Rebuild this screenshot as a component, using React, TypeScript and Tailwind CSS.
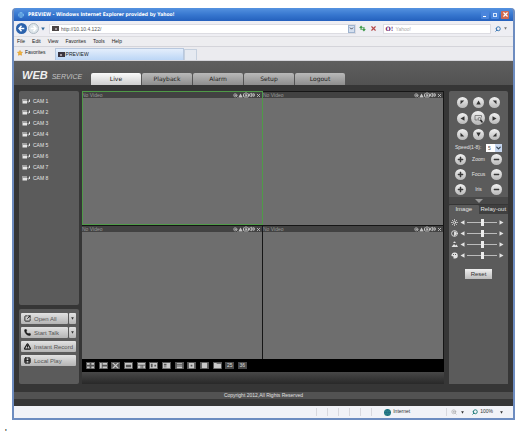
import type { ReactNode } from "react";
import {
  Camera,
  ChevronDown,
  Contrast,
  Film,
  Globe,
  Phone,
  Search,
  SquareArrowOutUpRight,
  Star,
  Sun,
  TriangleAlert,
  Volume2,
  X,
  ZoomIn,
} from "lucide-react";

const cameras = [1, 2, 3, 4, 5, 6, 7, 8];
const menus = ["File", "Edit", "View", "Favorites", "Tools", "Help"];
const tabs = ["Live", "Playback", "Alarm", "Setup", "Logout"];

const ptzKeys = [
  { name: "Up left", d: "M1 1h7.500L1 8.500z" },
  { name: "Up", d: "M5 1 9.500 9h-9z" },
  { name: "Up right", d: "M9 1v7.500L1.500 1z" },
  { name: "Left", d: "M1 5 9 .5v9z" },
  { name: "Position", d: "" },
  { name: "Right", d: "M9 5 1 .5v9z" },
  { name: "Down left", d: "M1 9V1.500L8.500 9z" },
  { name: "Down", d: "M5 9 .5 1h9z" },
  { name: "Down right", d: "M9 9H1.500L9 1.500z" },
];

const layouts = [
  { name: "High quality", d: "M1 1h3v2H1zM6 1h3v2H6zM1 5h3v2H1zM6 5h3v2H6z" },
  { name: "Fluency", d: "M1 1h2v6H1zM4 1h5v2H4zM4 5h5v2H4z" },
  { name: "Full screen", d: "M1 1h2l2 2 2-2h2L6 4l3 3H7L5 5 3 7H1l3-3z" },
  { name: "1 window", d: "M1 1h8v6H1zM2 3v3h6V3z" },
  { name: "4 windows", d: "M1 1h8v2H1zM1 4h3v3H1zM5 4h1v3H5zM7 4h2v3H7z" },
  { name: "6 windows", d: "M1 1h8v6H1zM2 2v4h2V2zM6 3v2h2V3z" },
  { name: "8 windows", d: "M1 1h8v6H1zM2 2v2h3V2zM2 5v1h3V5z" },
  { name: "9 windows", d: "M2 1h6v1H2zM2 3h6v1H2zM2 5h6v2H2z" },
  { name: "13 windows", d: "M2 1h6v6H2zM4 3v2h2V3z" },
  { name: "16 windows", d: "M2 1h6v6H2z" },
  { name: "20 windows", d: "M1 1h3v1h5v5H1z" },
];

const adjustments = [
  { name: "Brightness", icon: <Sun className="size-[7px]" strokeWidth={3} /> },
  { name: "Contrast", icon: <Contrast className="size-[7px] [&_path]:fill-current" strokeWidth={3} /> },
  {
    name: "Saturation",
    icon: (
      <svg viewBox="0 0 14 14" className="size-[7px]" fill="currentColor">
        <path d="M1 12 6 6l3 3 2-2 3 5zM7 1a2 2 0 0 1 2 3H5a2 2 0 0 1 2-3z" />
      </svg>
    ),
  },
  {
    name: "Hue",
    icon: (
      <svg viewBox="0 0 14 14" className="size-[7px]" fill="currentColor" fillRule="evenodd">
        <path d="M7 1a6 6 0 0 1 1 12H5V9L1 8a6 6 0 0 1 6-7zM4 4v2h2V4zM8 4v2h2V4z" />
      </svg>
    ),
  },
];

function Triangle({ angle, className }: { angle: number; className: string }) {
  return (
    <svg viewBox="0 0 10 10" className={className} fill="currentColor">
      <path d="M5 1 9.500 9h-9z" transform={`rotate(${angle} 5 5)`} />
    </svg>
  );
}

function TitleBar() {
  return (
    <div className="flex h-[13px] items-center gap-1 rounded-t-sm bg-linear-to-b from-[#5592e0] via-[#3878d0] to-[#2460bd] px-1 text-white">
      <Globe className="size-[6px] text-[#8fd0f5]" />
      <h1 className="font-['DejaVu_Sans_Condensed','DejaVu_Sans',sans-serif] text-[5px] font-bold whitespace-nowrap">
        PREVIEW - Windows Internet Explorer provided by Yahoo!
      </h1>
      <div className="ml-auto flex gap-[2px]">
        <button aria-label="Minimize" className="flex size-2 items-end rounded-[1px] bg-[#4a85dc] p-[2px]">
          <span className="h-px w-[3px] bg-white" />
        </button>
        <button aria-label="Maximize" className="flex size-2 items-center justify-center rounded-[1px] bg-[#4a85dc]">
          <span className="size-1 border border-[#d5e6fb]" />
        </button>
        <button aria-label="Close" className="flex size-2 items-center justify-center rounded-[1px] bg-[#d0694e]">
          <X className="size-[7px]" strokeWidth={4} />
        </button>
      </div>
    </div>
  );
}

function AddressBar() {
  return (
    <div className="flex h-[15px] items-center bg-[#eeeef3] pr-1 pl-[2px]">
      <button aria-label="Back" className="flex size-[11px] items-center justify-center rounded-full bg-[#2b62ac] text-white">
        <svg viewBox="0 0 10 10" className="size-[7px]" fill="none" stroke="currentColor" strokeWidth="2">
          <path d="M9 5H2M5 1 1.500 5 5 9" />
        </svg>
      </button>
      <button aria-label="Forward" className="ml-px flex size-[11px] items-center justify-center rounded-full border border-[#aebac4] bg-[#dde5ea] text-white">
        <svg viewBox="0 0 10 10" className="size-[7px]" fill="none" stroke="currentColor" strokeWidth="2">
          <path d="M1 5h7M5 1l3.500 4L5 9" />
        </svg>
      </button>
      <button aria-label="Recent pages" className="ml-[2px] text-[#31699c]">
        <Triangle angle={180} className="size-1" />
      </button>
      <div className="ml-1 flex h-[10px] flex-1 items-center border border-[#dcdce2] bg-white pl-[2px]">
        <span className="flex h-[5px] w-[7px] items-center justify-center bg-[#4b4444]">
          <span className="size-[2px] bg-[#a39aa0]" />
        </span>
        <input
          aria-label="Address"
          defaultValue="http://10.10.4.122/"
          className="ml-[2px] min-w-0 flex-1 bg-transparent text-[5px] leading-[8px] text-[#555]"
        />
        <button aria-label="Show addresses" className="flex h-2 w-[7px] items-center justify-center border border-[#9fb4d0] bg-[#d4dfef] text-[#334]">
          <ChevronDown className="size-[5px]" strokeWidth={4} />
        </button>
      </div>
      <button aria-label="Refresh" className="ml-[3px] flex size-2 items-center justify-center text-[#3f9a49]">
        <svg viewBox="0 0 10 10" className="size-[7px]" fill="none" stroke="currentColor" strokeWidth="1.600">
          <path d="M3 7V2M1 4l2-2 2 2M7 3v5M5 6l2 2 2-2" />
        </svg>
      </button>
      <button aria-label="Stop" className="ml-[3px] flex size-2 items-center justify-center text-[#b54a4a]">
        <X className="size-[7px]" strokeWidth={4} />
      </button>
      <div className="ml-[5px] flex h-[10px] w-[22%] items-center border border-[#dcdce2] bg-white pl-[2px]">
        <b className="font-['DejaVu_Serif',serif] text-[6px] leading-none text-[#68226e]">O!</b>
        <input
          aria-label="Search"
          placeholder="Yahoo!"
          className="ml-[2px] min-w-0 flex-1 bg-transparent text-[5px] leading-[8px] placeholder:text-[#aaa]"
        />
      </div>
      <button aria-label="Run search" className="ml-[3px] flex size-2 items-center justify-center text-[#3c78b4]">
        <Search className="size-[6px] -scale-x-100" strokeWidth={4} />
      </button>
      <button aria-label="Search options" className="text-[#777]">
        <Triangle angle={180} className="mx-[2px] size-[3px]" />
      </button>
    </div>
  );
}

function BrowserTop() {
  return (
    <>
      <TitleBar />
      <AddressBar />
      <nav className="flex h-[10px] items-center gap-[7px] border-t border-[#dcdce0] bg-[#ededf0] px-[3px] text-[5px] text-[#222]">
        {menus.map((menu) => (
          <button key={menu}>{menu}</button>
        ))}
      </nav>
      <div className="flex h-[15px] items-end border-t border-b border-[#d4d4da] bg-[#ebebef] pl-[3px] text-[5px] text-[#222]">
        <button className="flex h-[12px] items-center gap-[2px] pb-[2px]">
          <Star className="size-[6px] fill-[#f0b23c] text-[#d99323]" />
          Favorites
        </button>
        <button className="ml-[9px] flex h-[12px] w-[26%] items-center gap-px border border-b-0 border-[#b8c8de] bg-linear-to-b from-[#e4eefb] to-[#bcd6f6] pl-[2px]">
          <span className="flex h-[5px] w-[7px] items-center justify-center bg-[#3b3540]">
            <span className="size-[2px] bg-[#a39aa0]" />
          </span>
          PREVIEW
        </button>
        <button aria-label="New tab" className="h-[11px] w-[13px] border border-b-0 border-[#c5d0de] bg-[#e6eaf1]" />
      </div>
    </>
  );
}

function CameraIcon() {
  return (
    <svg viewBox="0 0 16 10" className="h-[5px] w-2" fill="currentColor">
      <path d="M0 1h10v2H0zM1 4h9v5H1zM11 5l2-2v5l-2-2zM14 1h2v5h-2z" />
    </svg>
  );
}

function SideButton({ icon, label, menu }: { icon: ReactNode; label: string; menu?: boolean }) {
  return (
    <div className="flex h-[11px] gap-px">
      <button className="flex flex-1 items-center gap-[3px] rounded-[1px] bg-linear-to-b from-[#e2e2e2] to-[#b5b5b5] pl-[3px] text-[6px] leading-none whitespace-nowrap text-[#555]">
        <span className="text-[#1b1b1b]">{icon}</span>
        {label}
      </button>
      {menu && (
        <button aria-label={`${label} options`} className="flex w-[7px] items-center justify-center rounded-[1px] bg-linear-to-b from-[#e2e2e2] to-[#b5b5b5] text-[#333]">
          <Triangle angle={180} className="size-[3px]" />
        </button>
      )}
    </div>
  );
}

function Sidebar() {
  return (
    <aside className="flex flex-col gap-1">
      <ul className="flex-1 rounded-xs bg-[#5b5b5b] pt-[5px] pl-[3px] text-[5px] text-[#e6e6e6]">
        {cameras.map((n) => (
          <li key={n} className="flex h-[11px] items-center gap-[3px]">
            <CameraIcon />
            CAM {n}
          </li>
        ))}
      </ul>
      <div className="flex h-[75px] flex-col gap-[3px] rounded-xs bg-[#5b5b5b] pt-1 pr-[3px] pl-[2px]">
        <SideButton icon={<SquareArrowOutUpRight className="size-[7px]" strokeWidth={3} />} label="Open All" menu />
        <SideButton icon={<Phone className="size-[7px] fill-current" />} label="Start Talk" menu />
        <SideButton icon={<TriangleAlert className="size-[7px]" strokeWidth={4} />} label="Instant Record" />
        <SideButton icon={<Film className="size-[7px]" strokeWidth={3} />} label="Local Play" />
      </div>
    </aside>
  );
}

function VideoCell({ active }: { active?: boolean }) {
  return (
    <section
      className={`flex flex-col border-t border-r border-[#161616] ${
        active ? "outline -outline-offset-1 outline-[#4f9a48]" : ""
      }`}
    >
      <header className="flex h-[6px] items-center justify-between bg-[#424242] text-[5px] leading-none text-[#999]">
        <span>No Video</span>
        <span className="flex items-center pr-px text-[#c4c4c4]">
          <ZoomIn className="size-[5px]" strokeWidth={3} />
          <Triangle angle={0} className="size-[5px]" />
          <Camera className="size-[6px]" strokeWidth={4} />
          <Volume2 className="size-[6px]" strokeWidth={4} />
          <X className="ml-px size-[5px]" strokeWidth={4} />
        </span>
      </header>
      <div className="aspect-[180/127] bg-[#6e6e6e]" />
    </section>
  );
}

function Viewer() {
  return (
    <main className="mr-[2px] bg-linear-to-b from-[#444] to-[#2b2b2b]">
      <div className="grid grid-cols-2">
        <VideoCell active />
        <VideoCell />
        <VideoCell />
        <VideoCell />
      </div>
      <div className="bg-black py-[3px] pl-1">
        <div className="flex w-[161px] justify-between">
          {layouts.map((item) => (
            <button key={item.name} aria-label={item.name} className="h-[7px] w-[9px] bg-[#565656] text-[#c9c9c9]">
              <svg viewBox="0 0 10 8" className="size-full" fill="currentColor" fillRule="evenodd">
                <path d={item.d} />
              </svg>
            </button>
          ))}
          <button className="h-[7px] w-[9px] bg-[#484848] text-[5px] leading-[7px] text-[#ddd]">25</button>
          <button className="h-[7px] w-[9px] bg-[#484848] text-[5px] leading-[7px] text-[#ddd]">36</button>
        </div>
      </div>
      <div className="h-3 bg-linear-to-b from-[#484848] to-[#292929]" />
    </main>
  );
}

function LensRow({ label }: { label: string }) {
  const round =
    "flex size-[11px] items-center justify-center rounded-full bg-linear-to-b from-[#f2f2f2] to-[#b9b9b9] text-[#3a3a3a]";
  return (
    <div className="flex h-[15px] items-center justify-between">
      <button aria-label={`${label} in`} className={round}>
        <svg viewBox="0 0 7 7" className="size-[7px]" fill="currentColor">
          <path d="M3 1h1v2h2v1H4v2H3V4H1V3h2z" stroke="currentColor" strokeWidth=".5" />
        </svg>
      </button>
      <span>{label}</span>
      <button aria-label={`${label} out`} className={round}>
        <svg viewBox="0 0 7 7" className="size-[7px]" fill="currentColor">
          <path d="M1 3h5v1H1z" stroke="currentColor" strokeWidth=".5" />
        </svg>
      </button>
    </div>
  );
}

function ControlPanel() {
  return (
    <aside className="flex flex-col text-[5px] text-[#e3e3e3]">
      <div className="rounded-t-xs bg-[#5b5b5b] px-[6px] pt-[3px]">
        <div className="grid grid-cols-3 place-items-center">
          {ptzKeys.map((key) => (
            <div key={key.name} className="flex h-4 items-center">
              {key.d ? (
                <button aria-label={key.name} className="flex size-[11px] items-center justify-center rounded-full bg-linear-to-b from-[#f2f2f2] to-[#b9b9b9] text-[#333]">
                  <svg viewBox="0 0 10 10" className="size-[5px]" fill="currentColor">
                    <path d={key.d} />
                  </svg>
                </button>
              ) : (
                <button aria-label={key.name} className="flex size-[14px] items-center justify-center rounded-full bg-linear-to-b from-[#f2f2f2] to-[#b4b4b4] text-[#666]">
                  <svg viewBox="0 0 18 18" className="size-[9px]" fill="none" stroke="currentColor" strokeWidth="1.500">
                    <path d="M7 12H2V3h13v4" />
                    <circle cx="11" cy="10" r="3" />
                    <path d="m13 12 4 5" stroke="#222" strokeWidth="3" />
                  </svg>
                </button>
              )}
            </div>
          ))}
        </div>
        <div className="mt-px flex h-[9px] items-center justify-between">
          <label htmlFor="speed">Speed(1-8):</label>
          <div className="relative">
            <select id="speed" defaultValue="5" className="block h-2 w-4 appearance-none bg-white pl-[2px] text-[5px] leading-[8px] text-[#444]">
              {cameras.map((n) => (
                <option key={n}>{n}</option>
              ))}
            </select>
            <ChevronDown className="pointer-events-none absolute top-0 right-0 h-2 w-[7px] bg-[#c5d5ee] text-[#345]" strokeWidth={4} />
          </div>
        </div>
        <LensRow label="Zoom" />
        <LensRow label="Focus" />
        <LensRow label="Iris" />
      </div>
      <button aria-label="Collapse" className="flex h-[7px] items-center justify-center bg-[#484848] text-[#999]">
        <svg viewBox="0 0 8 4" className="h-1 w-2" fill="currentColor">
          <path d="M0 0h8L4 4z" />
        </svg>
      </button>
      <div className="flex h-[10px] bg-[#363636] pt-px text-[6px] leading-[9px] whitespace-nowrap">
        <button className="w-1/2 rounded-t-[1px] bg-[#5b5b5b]">Image</button>
        <button className="w-1/2 bg-[#404040]">Relay-out</button>
      </div>
      <div className="flex-1 bg-[#5b5b5b] px-[2px] pt-[3px]">
        {adjustments.map((item) => (
          <div key={item.name} className="flex h-[11px] items-center gap-[2px]">
            {item.icon}
            <button aria-label={`Less ${item.name}`}>
              <Triangle angle={-90} className="size-[5px]" />
            </button>
            <input
              type="range"
              aria-label={item.name}
              defaultValue={50}
              className="h-2 min-w-0 flex-1 appearance-none bg-transparent [&::-webkit-slider-runnable-track]:h-px [&::-webkit-slider-runnable-track]:bg-[#bbb] [&::-webkit-slider-thumb]:-mt-[3px] [&::-webkit-slider-thumb]:h-[7px] [&::-webkit-slider-thumb]:w-[3px] [&::-webkit-slider-thumb]:appearance-none [&::-webkit-slider-thumb]:bg-[#ededed]"
            />
            <button aria-label={`More ${item.name}`} className="pr-[2px]">
              <Triangle angle={90} className="size-[5px]" />
            </button>
          </div>
        ))}
        <button className="mx-auto mt-[8px] block h-[10px] w-[27px] bg-linear-to-b from-[#f0f0f0] to-[#bdbdbd] text-[6px] leading-[10px] text-[#333]">
          Reset
        </button>
      </div>
    </aside>
  );
}

function WebService() {
  return (
    <div className="bg-[#363636]">
      <header className="flex h-[24px] items-end bg-linear-to-b from-[#5e5e5e] to-[#525252] text-[#eee]">
        <div className="flex w-[77px] items-baseline gap-1 pb-[2px] pl-2 italic">
          <span className="text-[11px] leading-[12px] font-bold">WEB</span>
          <span className="text-[7px] leading-[12px] text-[#c4c4c4]">SERVICE</span>
        </div>
        <nav className="flex gap-px">
          {tabs.map((tab, i) => (
            <a
              key={tab}
              href={`#${tab.toLowerCase()}`}
              className={`block h-3 w-[50px] rounded-t-xs text-center font-['DejaVu_Sans',sans-serif] text-[6px] leading-[12px] text-[#222] ${
                i === 0 ? "bg-linear-to-b from-[#fafafa] to-[#cfcfcf]" : "bg-linear-to-b from-[#b9b9b9] to-[#8e8e8e]"
              }`}
            >
              {tab}
            </a>
          ))}
        </nav>
      </header>
      <div className="grid grid-cols-[60px_1fr_59px] gap-x-[3px] px-[5px] pt-[6px] pb-2">
        <Sidebar />
        <Viewer />
        <ControlPanel />
      </div>
      <footer className="pb-[7px]">
        <p className="h-[7px] bg-[#525252] text-center text-[5px] leading-[7px] text-[#e0e0e0]">
          Copyright 2012,All Rights Reserved
        </p>
      </footer>
    </div>
  );
}

function StatusBar() {
  return (
    <div className="flex h-[12px] items-center bg-[#f1f2f7] text-[5px] text-[#333]">
      <div className="ml-auto flex gap-[10px] pr-3">
        {[1, 2, 3, 4, 5, 6].map((n) => (
          <span key={n} className="h-2 w-px bg-[#d8d8de]" />
        ))}
      </div>
      <Globe className="size-[7px] rounded-full bg-[#2f8f86] text-[#1e5e86]" />
      <span className="ml-[2px]">Internet</span>
      <span className="ml-[36px] h-2 w-px bg-[#d8d8de]" />
      <ZoomIn className="ml-1 size-[6px] text-[#999]" />
      <Triangle angle={180} className="ml-1 size-[3px]" />
      <Search className="ml-[8px] size-[6px] -scale-x-100 text-[#2b8280]" strokeWidth={4} />
      <span className="ml-[2px]">100%</span>
      <Triangle angle={180} className="mr-[10px] ml-[7px] size-[3px]" />
    </div>
  );
}

export default function App() {
  return (
    <div className="bg-white pt-2 pr-[3px] pl-3 font-['Liberation_Sans',Arial,sans-serif]">
      <div className="rounded-t-sm border-x-2 border-b-2 border-[#6d8cc0] bg-[#6d8cc0]">
        <BrowserTop />
        <WebService />
        <StatusBar />
      </div>
      <p className="-ml-[7px] pt-[6px] text-[9px] leading-[12px] text-black">'</p>
    </div>
  );
}
